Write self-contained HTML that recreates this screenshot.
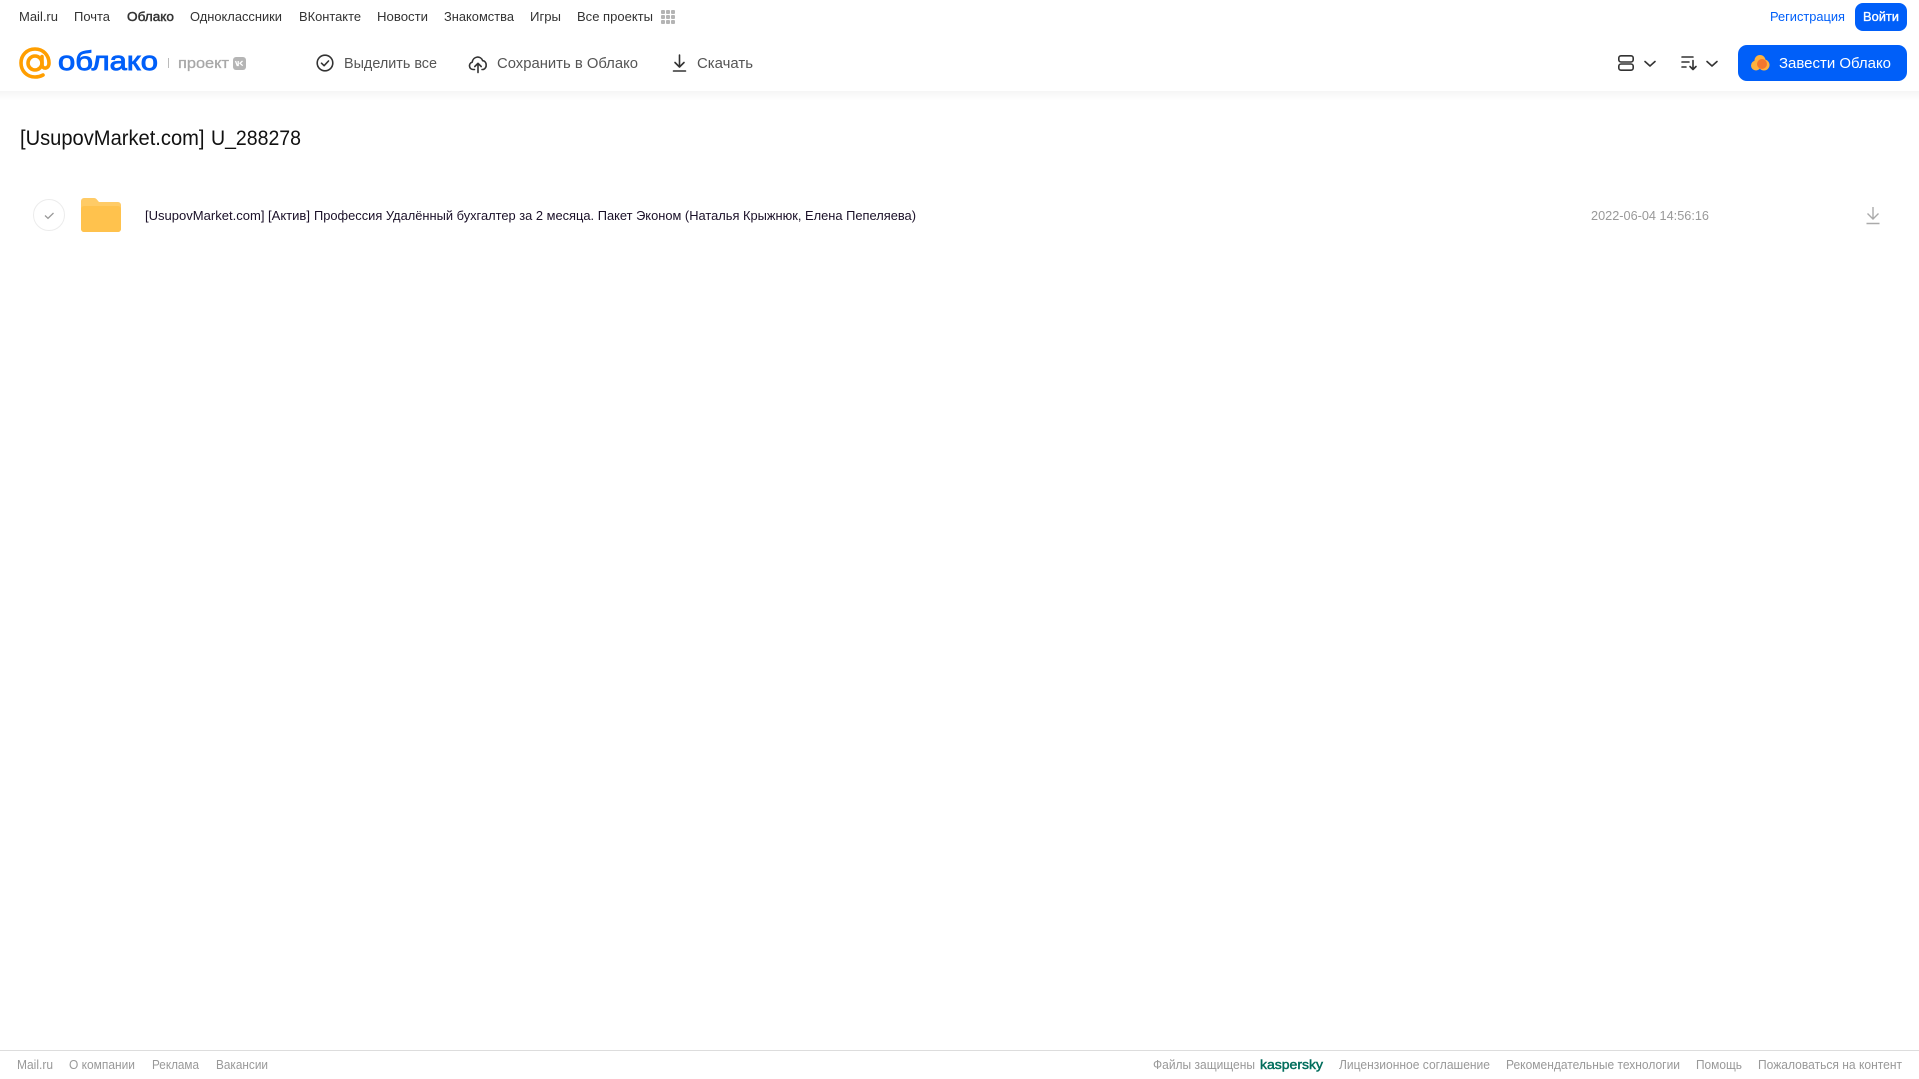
<!DOCTYPE html>
<html lang="ru"><head><meta charset="utf-8"><title>Облако</title>
<style>
html,body{margin:0;padding:0;background:#fff;overflow:hidden;width:1919px;height:1079px}
svg{display:block;position:absolute;left:0;top:0}
text{font-family:"Liberation Sans","DejaVu Sans",sans-serif}
.n{font-size:13px;fill:#333}
.t{font-size:15px;fill:#555}
.f{font-size:12.5px;fill:#999}
</style></head><body>
<svg width="1919" height="1079" viewBox="0 0 1919 1079" xmlns="http://www.w3.org/2000/svg">
<defs><linearGradient id="g" x1="0" y1="0" x2="0" y2="1"><stop offset="0" stop-color="#f5f5f5"/><stop offset="1" stop-color="#fff"/></linearGradient></defs>
<rect x="0" y="91" width="1919" height="10" fill="url(#g)"/>

<text class="n" x="19" y="21" textLength="39" lengthAdjust="spacingAndGlyphs">Mail.ru</text>
<text class="n" x="74" y="21" textLength="36" lengthAdjust="spacingAndGlyphs">Почта</text>
<text class="n" x="127" y="21" textLength="47" lengthAdjust="spacingAndGlyphs" stroke="#333" stroke-width=".45">Облако</text>
<text class="n" x="190" y="21" textLength="92" lengthAdjust="spacingAndGlyphs">Одноклассники</text>
<text class="n" x="299" y="21" textLength="62" lengthAdjust="spacingAndGlyphs">ВКонтакте</text>
<text class="n" x="377" y="21" textLength="51" lengthAdjust="spacingAndGlyphs">Новости</text>
<text class="n" x="444" y="21" textLength="70" lengthAdjust="spacingAndGlyphs">Знакомства</text>
<text class="n" x="530" y="21" textLength="31" lengthAdjust="spacingAndGlyphs">Игры</text>
<text class="n" x="577" y="21" textLength="76" lengthAdjust="spacingAndGlyphs">Все проекты</text>
<g fill="#b4b4b4"><rect x="661" y="10" width="4" height="4" rx="1"/><rect x="666" y="10" width="4" height="4" rx="1"/><rect x="671" y="10" width="4" height="4" rx="1"/><rect x="661" y="15" width="4" height="4" rx="1"/><rect x="666" y="15" width="4" height="4" rx="1"/><rect x="671" y="15" width="4" height="4" rx="1"/><rect x="661" y="20" width="4" height="4" rx="1"/><rect x="666" y="20" width="4" height="4" rx="1"/><rect x="671" y="20" width="4" height="4" rx="1"/></g>

<text x="1770" y="21" font-size="13" fill="#005ff9" textLength="75" lengthAdjust="spacingAndGlyphs">Регистрация</text>
<rect x="1855" y="3" width="52" height="28" rx="8" fill="#005ff9"/>
<text x="1863" y="21" font-size="13" fill="#fff" stroke="#fff" stroke-width=".35" textLength="36" lengthAdjust="spacingAndGlyphs">Войти</text>

<g fill="none" stroke="#ff9e00" stroke-width="3.600" stroke-linecap="round"><circle cx="35" cy="63" r="7"/><path d="M42 56.500v8c0 5 7 5 7-1.500 0-8-6-14-14-14s-14 6-14 14 6 14 14 14c3 0 5.500-.6 8-2"/></g>
<text x="58" y="70" font-size="27" fill="#005ff9" stroke="#005ff9" stroke-width=".9" textLength="100" lengthAdjust="spacingAndGlyphs">облако</text>
<rect x="168" y="58" width="1" height="10" fill="#bbb"/>
<text x="178" y="68" font-size="15" fill="#a8a8a8" stroke="#a8a8a8" stroke-width=".3" textLength="51" lengthAdjust="spacingAndGlyphs">проект</text>
<rect x="233" y="57" width="13" height="13" rx="3" fill="#b5b5b5"/>
<path d="M235.500 61l1.700 4.500h1V61M242.500 61l-2.500 2.200 2.700 2.500" fill="none" stroke="#fff" stroke-width="1.300"/>

<g fill="none" stroke="#333" stroke-width="1.600" stroke-linecap="round" stroke-linejoin="round">
<circle cx="325" cy="63" r="7.800"/><path d="M321.500 63.200l2.600 2.500 4.400-4.700"/>
<path d="M474.500 69.500h-1.500c-4.200 0-4.800-6.300-.8-7.300 .8-6 8.500-7 10.500-1.500 4 .2 5 7 .6 8.800h-1.300"/><path d="M478 72.500v-9M474.800 66.500l3.200-3.200 3.200 3.200"/>
<path d="M679.500 55v12M675 62.500l4.500 4.500 4.500-4.500M673.500 71h12"/>
</g>
<text class="t" x="344" y="68" textLength="93" lengthAdjust="spacingAndGlyphs">Выделить все</text>
<text class="t" x="497" y="68" textLength="141" lengthAdjust="spacingAndGlyphs">Сохранить в Облако</text>
<text class="t" x="697" y="68" textLength="56" lengthAdjust="spacingAndGlyphs">Скачать</text>

<g fill="none" stroke="#333" stroke-width="1.600" stroke-linecap="round" stroke-linejoin="round">
<rect x="1618.800" y="55.800" width="14.400" height="6.200" rx="2.200"/><rect x="1618.800" y="64" width="14.400" height="6.200" rx="2.200"/>
<path d="M1645 61.500l5 4.500 5-4.500"/>
<path d="M1682 57h11M1682 62h7M1682 67h4M1693 60.500v9M1690 66.500l3 3 3-3"/>
<path d="M1707 61.500l5 4.500 5-4.500"/>
</g>

<rect x="1738" y="45" width="169" height="36" rx="9" fill="#005ff9"/>
<g fill="#ffb23e"><circle cx="1756" cy="65.500" r="5"/><circle cx="1760" cy="60.500" r="5.500"/><circle cx="1764" cy="65" r="5.500"/></g>
<circle cx="1762" cy="64" r="5" fill="#f4772e"/>
<text x="1779" y="68" font-size="15" fill="#fff" textLength="112" lengthAdjust="spacingAndGlyphs">Завести Облако</text>

<text x="20" y="145" font-size="21" fill="#111" textLength="184.500" lengthAdjust="spacingAndGlyphs">[UsupovMarket.com]</text>
<text x="211" y="145" font-size="21" fill="#111" textLength="90" lengthAdjust="spacingAndGlyphs">U_288278</text>

<circle cx="49" cy="215" r="15.500" fill="#fff" stroke="#ececec"/>
<path d="M45 215.500l3 2.800 5.500-5.300" fill="none" stroke="#999" stroke-width="1.300"/>
<path d="M81 201a3 3 0 0 1 3-3h10c2.500 0 3.500 2.500 5 4h19a3 3 0 0 1 3 3v24a3 3 0 0 1-3 3H84a3 3 0 0 1-3-3z" fill="#ffcb66"/>
<rect x="81" y="206" width="40" height="26" rx="3" fill="#ffc24d"/>

<text x="145" y="220" font-size="13" fill="#1a1028" textLength="119.500" lengthAdjust="spacingAndGlyphs">[UsupovMarket.com]</text>
<text x="268" y="220" font-size="13" fill="#1a1028" textLength="42" lengthAdjust="spacingAndGlyphs">[Актив]</text>
<text x="314" y="220" font-size="13" fill="#1a1028" textLength="602" lengthAdjust="spacingAndGlyphs">Профессия Удалённый бухгалтер за 2 месяца. Пакет Эконом (Наталья Крыжнюк, Елена Пепеляева)</text>
<text x="1591" y="220" font-size="13" fill="#999" textLength="118" lengthAdjust="spacingAndGlyphs">2022-06-04 14:56:16</text>
<path d="M1873 207v12M1867.500 213.500l5.500 5.500 5.500-5.500M1866.500 223.500h13" fill="none" stroke="#aaa" stroke-width="1.400"/>

<rect x="0" y="1050" width="1919" height="1" fill="#ddd"/>
<text class="f" x="17" y="1069" textLength="36" lengthAdjust="spacingAndGlyphs">Mail.ru</text>
<text class="f" x="69" y="1069" textLength="66" lengthAdjust="spacingAndGlyphs">О компании</text>
<text class="f" x="152" y="1069" textLength="47" lengthAdjust="spacingAndGlyphs">Реклама</text>
<text class="f" x="216" y="1069" textLength="52" lengthAdjust="spacingAndGlyphs">Вакансии</text>
<text class="f" x="1153" y="1069" textLength="102" lengthAdjust="spacingAndGlyphs">Файлы защищены</text>
<text x="1260" y="1069" font-size="13" fill="#006d5c" stroke="#006d5c" stroke-width=".45" textLength="63" lengthAdjust="spacingAndGlyphs">kaspersky</text>
<text class="f" x="1339" y="1069" textLength="151" lengthAdjust="spacingAndGlyphs">Лицензионное соглашение</text>
<text class="f" x="1506" y="1069" textLength="174" lengthAdjust="spacingAndGlyphs">Рекомендательные технологии</text>
<text class="f" x="1696" y="1069" textLength="46" lengthAdjust="spacingAndGlyphs">Помощь</text>
<text class="f" x="1758" y="1069" textLength="144" lengthAdjust="spacingAndGlyphs">Пожаловаться на контент</text>
</svg>
</body></html>
